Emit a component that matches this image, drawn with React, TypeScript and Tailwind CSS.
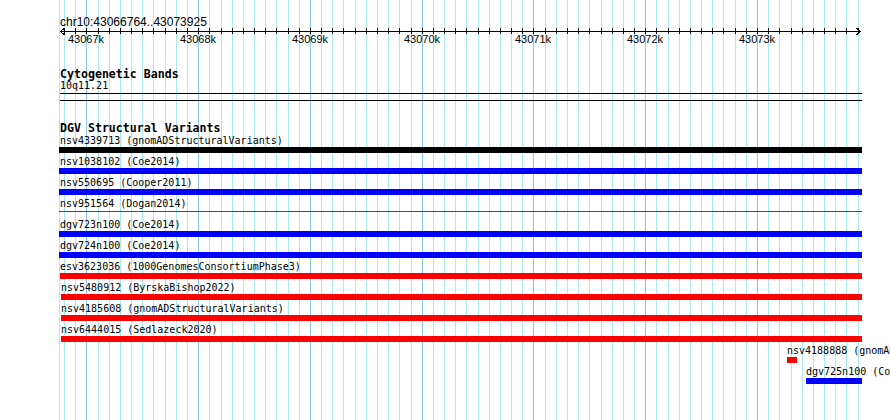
import React from "react";

const START = 43066764;
const PX_PER_BP = 0.11177;
const X0 = 60;

const toX = (pos: number) => Math.round(X0 + (pos - START) * PX_PER_BP);

const gridPositions: number[] = [];
for (let p = 43066800; p <= 43073900; p += 100) gridPositions.push(p);

type Feature = {
  name: string;
  left: number;
  right: number;
  labelLeft: number;
  color: string;
  thin?: boolean;
};

const features: Feature[] = [
  { name: "nsv4339713 (gnomADStructuralVariants)", left: 59, right: 862, labelLeft: 60, color: "bg-black" },
  { name: "nsv1038102 (Coe2014)", left: 59, right: 862, labelLeft: 60, color: "bg-[#0000ff]" },
  { name: "nsv550695 (Cooper2011)", left: 59, right: 862, labelLeft: 60, color: "bg-[#0000ff]" },
  { name: "nsv951564 (Dogan2014)", left: 59, right: 862, labelLeft: 60, color: "bg-[#ff0000]", thin: true },
  { name: "dgv723n100 (Coe2014)", left: 59, right: 862, labelLeft: 60, color: "bg-[#0000ff]" },
  { name: "dgv724n100 (Coe2014)", left: 59, right: 862, labelLeft: 60, color: "bg-[#0000ff]" },
  { name: "esv3623036 (1000GenomesConsortiumPhase3)", left: 60, right: 862, labelLeft: 60, color: "bg-[#ff0000]" },
  { name: "nsv5480912 (ByrskaBishop2022)", left: 61, right: 862, labelLeft: 61, color: "bg-[#ff0000]" },
  { name: "nsv4185608 (gnomADStructuralVariants)", left: 61, right: 862, labelLeft: 61, color: "bg-[#ff0000]" },
  { name: "nsv6444015 (Sedlazeck2020)", left: 61, right: 862, labelLeft: 61, color: "bg-[#ff0000]" },
  { name: "nsv4188888 (gnomADStructuralVariants)", left: 787, right: 797, labelLeft: 787, color: "bg-[#ff0000]" },
  { name: "dgv725n100 (Coe2014)", left: 806, right: 862, labelLeft: 806, color: "bg-[#0000ff]" },
];

function GridLines() {
  return (
    <svg className="absolute inset-0" width={890} height={420} shapeRendering="crispEdges">
      <rect x={59} y={0} width={1} height={420} fill="#aae9ef" />
      {gridPositions.map((p) => (
        <rect
          key={p}
          x={toX(p)}
          y={0}
          width={1}
          height={420}
          fill={p % 1000 === 0 ? "#8ac8ee" : "#aae9ef"}
        />
      ))}
    </svg>
  );
}

function Ruler() {
  return (
    <svg width={890} height={18} shapeRendering="crispEdges" className="block">
      <rect x={60} y={3} width={801} height={1} fill="#000" />
      {gridPositions.map((p) => (
        <rect key={p} x={toX(p)} y={0} width={1} height={6} fill="#000" />
      ))}
      <polyline points="64.5,0 60.5,3.5 64.5,7" fill="none" stroke="#000" strokeWidth={1} />
      <polyline points="856.5,0 860.5,3.5 856.5,7" fill="none" stroke="#000" strokeWidth={1} />
      {gridPositions
        .filter((p) => p % 1000 === 0)
        .map((p) => (
          <text
            key={p}
            x={toX(p)}
            y={15}
            textAnchor="middle"
            fontSize={11}
            fontFamily="'Liberation Sans', Arial, sans-serif"
            fill="#000"
          >
            {p / 1000}k
          </text>
        ))}
    </svg>
  );
}

function FeatureRow({ f }: { f: Feature }) {
  return (
    <div className="h-[21px]">
      <div
        className="h-[11px] leading-[11px] text-[10px] whitespace-nowrap text-black"
        style={{ marginLeft: f.labelLeft }}
      >
        {f.name}
      </div>
      {f.thin ? (
        <div className="mt-[2px] h-[1px] bg-[#ff0000]" style={{ marginLeft: f.left, width: f.right - f.left }} />
      ) : (
        <div className={`mt-[1px] h-[6px] ${f.color}`} style={{ marginLeft: f.left, width: f.right - f.left }} />
      )}
    </div>
  );
}

export default function App() {
  return (
    <div className="relative w-[890px] h-[420px] overflow-hidden bg-white font-['DejaVu_Sans_Mono',monospace]">
      <GridLines />
      <div className="relative">
        {/* ruler */}
        <div className="mt-[16px] ml-[60px] h-[12px] leading-[12px] text-[12px] font-['Liberation_Sans',Arial,sans-serif] text-black">
          chr10:43066764..43073925
        </div>
        <Ruler />

        {/* cytobands */}
        <div className="mt-[22px] ml-[60px] h-[12px] leading-[12px] text-[11.6px] font-bold text-black">
          Cytogenetic Bands
        </div>
        <div className="ml-[60px] h-[11px] leading-[11px] text-[10px] text-black">10q11.21</div>
        <div className="mt-[2px] ml-[60px] w-[802px] h-[1px] bg-black" />
        <div className="mt-[6px] ml-[60px] w-[802px] h-[1px] bg-black" />

        {/* structural variants */}
        <div className="mt-[21px] ml-[60px] h-[12px] leading-[12px] text-[11.6px] font-bold text-black">
          DGV Structural Variants
        </div>
        <div className="mt-[1px]">
          {features.map((f) => (
            <FeatureRow key={f.name + f.left} f={f} />
          ))}
        </div>
      </div>
    </div>
  );
}
